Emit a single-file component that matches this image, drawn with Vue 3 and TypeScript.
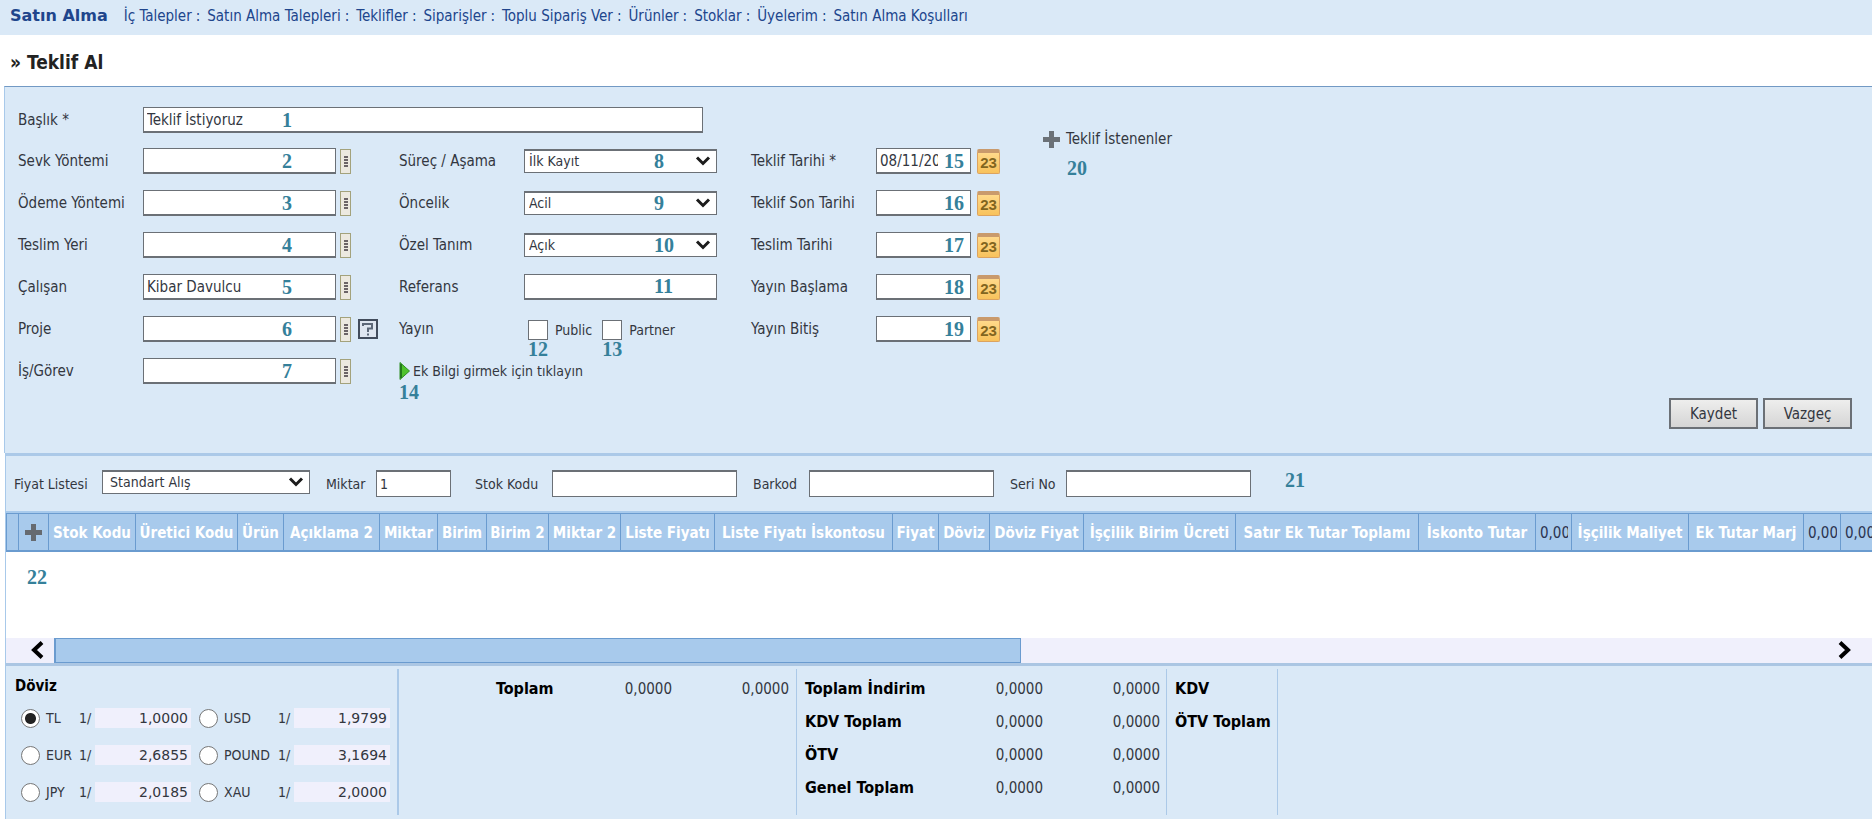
<script setup lang="ts">
import { ref } from 'vue'

interface LookupField {
  id: string
  label: string
  value: string
  mark: number
  help?: boolean
}
interface SelectField {
  id: string
  label: string
  value: string
  mark: number
}
interface Column {
  label?: string
  amount?: string
  width: number
  add?: boolean
}
interface Rate {
  code: string
  value: string
}

const navLinks = ['İç Talepler', 'Satın Alma Talepleri', 'Teklifler', 'Siparişler', 'Toplu Sipariş Ver', 'Ürünler', 'Stoklar', 'Üyelerim', 'Satın Alma Koşulları']

const lookups = ref<LookupField[]>([
  { id: 'sevk', label: 'Sevk Yöntemi', value: '', mark: 2 },
  { id: 'odeme', label: 'Ödeme Yöntemi', value: '', mark: 3 },
  { id: 'teslim-yeri', label: 'Teslim Yeri', value: '', mark: 4 },
  { id: 'calisan', label: 'Çalışan', value: 'Kibar Davulcu', mark: 5 },
  { id: 'proje', label: 'Proje', value: '', mark: 6, help: true },
  { id: 'is-gorev', label: 'İş/Görev', value: '', mark: 7 },
])

const selects: SelectField[] = [
  { id: 'surec', label: 'Süreç / Aşama', value: 'İlk Kayıt', mark: 8 },
  { id: 'oncelik', label: 'Öncelik', value: 'Acil', mark: 9 },
  { id: 'ozel-tanim', label: 'Özel Tanım', value: 'Açık', mark: 10 },
]

const dates = ref<SelectField[]>([
  { id: 'teklif-tarihi', label: 'Teklif Tarihi *', value: '08/11/2013', mark: 15 },
  { id: 'son-tarih', label: 'Teklif Son Tarihi', value: '', mark: 16 },
  { id: 'teslim-tarihi', label: 'Teslim Tarihi', value: '', mark: 17 },
  { id: 'yayin-baslama', label: 'Yayın Başlama', value: '', mark: 18 },
  { id: 'yayin-bitis', label: 'Yayın Bitiş', value: '', mark: 19 },
])

const filters = [
  { id: 'stok-kodu', label: 'Stok Kodu' },
  { id: 'barkod', label: 'Barkod' },
  { id: 'seri-no', label: 'Seri No' },
]

const columns: Column[] = [
  { width: 12 },
  { width: 30, add: true },
  { label: 'Stok Kodu', width: 87 },
  { label: 'Üretici Kodu', width: 102 },
  { label: 'Ürün', width: 46 },
  { label: 'Açıklama 2', width: 96 },
  { label: 'Miktar', width: 58 },
  { label: 'Birim', width: 49 },
  { label: 'Birim 2', width: 62 },
  { label: 'Miktar 2', width: 72 },
  { label: 'Liste Fiyatı', width: 94 },
  { label: 'Liste Fiyatı İskontosu', width: 178 },
  { label: 'Fiyat', width: 46 },
  { label: 'Döviz', width: 51 },
  { label: 'Döviz Fiyat', width: 94 },
  { label: 'İşçilik Birim Ücreti', width: 152 },
  { label: 'Satır Ek Tutar Toplamı', width: 183 },
  { label: 'İskonto Tutar', width: 117 },
  { amount: '0,0000', width: 36 },
  { label: 'İşçilik Maliyet', width: 117 },
  { label: 'Ek Tutar Marj', width: 115 },
  { amount: '0,0000', width: 37 },
  { amount: '0,0000', width: 36 },
]
const tableWidth = columns.reduce((sum, c) => sum + c.width, 0)

const currency = ref('TL')
const rates: Rate[] = [
  { code: 'TL', value: '1,0000' },
  { code: 'USD', value: '1,9799' },
  { code: 'EUR', value: '2,6855' },
  { code: 'POUND', value: '3,1694' },
  { code: 'JPY', value: '2,0185' },
  { code: 'XAU', value: '2,0000' },
]
const totals = ['Toplam İndirim', 'KDV Toplam', 'ÖTV', 'Genel Toplam']

const title = ref('Teklif İstiyoruz')
const quantity = ref('1')
</script>

<template>
  <div class="page">
    <nav class="nav">
      <strong class="module">Satın Alma</strong>
      <template v-for="(link, i) in navLinks" :key="link">
        <span v-if="i > 0" class="sep">:</span>
        <a href="#">{{ link }}</a>
      </template>
    </nav>

    <h1 class="title">» Teklif Al</h1>

    <form class="panel" @submit.prevent>
      <div class="fields">
        <div class="group wide">
          <div class="row">
            <label class="label" for="baslik">Başlık *</label>
            <div class="box full">
              <input id="baslik" v-model="title" type="text" />
              <span class="mark at-mid">1</span>
            </div>
          </div>
        </div>

        <div class="group">
          <div v-for="f in lookups" :key="f.id" class="row">
            <label class="label" :for="f.id">{{ f.label }}</label>
            <div class="box">
              <input :id="f.id" v-model="f.value" type="text" />
              <span class="mark at-mid">{{ f.mark }}</span>
            </div>
            <button type="button" class="pick" :aria-label="f.label">
              <svg width="4" height="11" viewBox="0 0 4 11" shape-rendering="crispEdges">
                <path d="M0 0h4v2H0zM0 3h4v2H0zM0 6h4v2H0zM0 9h4v2H0z" fill="#6b6468" />
              </svg>
            </button>
            <button v-if="f.help" type="button" class="help" aria-label="Yardım">
              <svg width="14" height="14" viewBox="0 0 14 14" fill="none" stroke="#5d6878" stroke-width="2">
                <path d="M2 4V2h9v4.500H7V10M7 11.500v2" />
              </svg>
            </button>
          </div>
        </div>

        <div class="group">
          <div v-for="f in selects" :key="f.id" class="row">
            <label class="label" :for="f.id">{{ f.label }}</label>
            <div class="box">
              <select :id="f.id"><option>{{ f.value }}</option></select>
              <svg class="chevron" width="16" height="10" viewBox="0 0 16 10">
                <path d="M2 1.500L8 7.500L14 1.500" fill="none" stroke="#1c1c1c" stroke-width="3" />
              </svg>
              <span class="mark at-select">{{ f.mark }}</span>
            </div>
          </div>
          <div class="row">
            <label class="label" for="referans">Referans</label>
            <div class="box">
              <input id="referans" type="text" />
              <span class="mark at-select">11</span>
            </div>
          </div>
          <div class="row">
            <span class="label">Yayın</span>
            <div class="checks">
              <label class="check"><input type="checkbox" />Public<span class="mark below">12</span></label>
              <label class="check"><input type="checkbox" />Partner<span class="mark below">13</span></label>
            </div>
          </div>
          <div class="row">
            <a href="#" class="more">
              <svg width="11" height="18" viewBox="0 0 11 18">
                <path d="M1 0.500L10.500 9L1 17.500Z" fill="#4fc32d" stroke="#2f8f22" />
                <path d="M2 2v14" stroke="#237a1c" stroke-width="2" />
              </svg>
              Ek Bilgi girmek için tıklayın
              <span class="mark below">14</span>
            </a>
          </div>
        </div>

        <div class="group">
          <div v-for="f in dates" :key="f.id" class="row">
            <label class="label" :for="f.id">{{ f.label }}</label>
            <div class="box date">
              <input :id="f.id" v-model="f.value" type="text" />
              <span class="mark at-date">{{ f.mark }}</span>
            </div>
            <button type="button" class="calendar" :aria-label="f.label + ' seç'">23</button>
          </div>
        </div>

        <div class="vendors">
          <button type="button" class="add-vendor">
            <svg width="17" height="17" viewBox="0 0 17 17"><path d="M6 0h5v6h6v5h-6v6H6v-6H0V6h6z" fill="#6b7177" /></svg>
            Teklif İstenenler
          </button>
          <span class="mark">20</span>
        </div>
      </div>

      <div class="actions">
        <button type="submit">Kaydet</button>
        <button type="button">Vazgeç</button>
      </div>
    </form>

    <div class="basket">
      <div class="filter">
        <label class="filter-item">
          Fiyat Listesi
          <span class="box list">
            <select><option>Standart Alış</option></select>
            <svg class="chevron" width="16" height="10" viewBox="0 0 16 10">
              <path d="M2 1.500L8 7.500L14 1.500" fill="none" stroke="#1c1c1c" stroke-width="3" />
            </svg>
          </span>
        </label>
        <label class="filter-item qty">Miktar <span class="box"><input v-model="quantity" type="text" /></span></label>
        <label v-for="f in filters" :key="f.id" class="filter-item" :class="f.id">{{ f.label }} <span class="box"><input type="text" /></span></label>
        <span class="mark filter-mark">21</span>
      </div>

      <div class="grid">
        <table :style="{ width: tableWidth + 'px' }">
          <colgroup>
            <col v-for="(c, i) in columns" :key="i" :style="{ width: c.width + 'px' }" />
          </colgroup>
          <thead>
            <tr>
              <th v-for="(c, i) in columns" :key="i" scope="col">
                <button v-if="c.add" type="button" class="add-row" aria-label="Satır ekle">
                  <svg width="17" height="17" viewBox="0 0 17 17"><path d="M6 0h5v6h6v5h-6v6H6v-6H0V6h6z" fill="#666a70" /></svg>
                </button>
                <input v-else-if="c.amount" type="text" class="amount" :value="c.amount" aria-label="Tutar" />
                <template v-else>{{ c.label }}</template>
              </th>
            </tr>
          </thead>
        </table>
        <div class="rows"><span class="mark">22</span></div>
      </div>

      <div class="scroll">
        <button type="button" class="arrow" aria-label="Sola kaydır">
          <svg width="14" height="18" viewBox="0 0 14 18"><path d="M12 1.500L4 9L12 16.500" fill="none" stroke="#000" stroke-width="4" /></svg>
        </button>
        <div class="thumb"></div>
        <div class="track"></div>
        <button type="button" class="arrow" aria-label="Sağa kaydır">
          <svg width="14" height="18" viewBox="0 0 14 18"><path d="M2 1.500L10 9L2 16.500" fill="none" stroke="#000" stroke-width="4" /></svg>
        </button>
      </div>
    </div>

    <footer class="summary">
      <fieldset class="rates">
        <legend>Döviz</legend>
        <div class="rate-grid">
          <div v-for="r in rates" :key="r.code" class="rate">
            <label class="rate-name"><input v-model="currency" type="radio" name="currency" :value="r.code" />{{ r.code }}</label>
            <span class="per">1/</span>
            <input type="text" class="rate-value" :value="r.value" :aria-label="r.code + ' kuru'" />
          </div>
        </div>
      </fieldset>
      <div class="cell sum">
        <table>
          <tbody>
            <tr><th scope="row">Toplam</th><td>0,0000</td><td>0,0000</td></tr>
          </tbody>
        </table>
      </div>
      <div class="cell totals">
        <table>
          <tbody>
            <tr v-for="t in totals" :key="t"><th scope="row">{{ t }}</th><td>0,0000</td><td>0,0000</td></tr>
          </tbody>
        </table>
      </div>
      <div class="cell taxes">
        <table>
          <tbody>
            <tr><th scope="row">KDV</th></tr>
            <tr><th scope="row">ÖTV Toplam</th></tr>
          </tbody>
        </table>
      </div>
    </footer>
  </div>
</template>

<style>
body {
  margin: 0;
  background: #fff;
}
</style>

<style scoped>
.page {
  display: flex;
  flex-direction: column;
  min-height: 100vh;
  overflow: hidden;
  font-family: "DejaVu Sans Condensed", Tahoma, "DejaVu Sans", sans-serif;
  font-size: 15px;
  line-height: 20px;
  color: #33373f;
}
.page *,
.page {
  box-sizing: border-box;
}
input,
select,
button {
  margin: 0;
  font: inherit;
  line-height: 20px;
  color: inherit;
}
button {
  padding: 0;
  border: 0;
  background: none;
}
svg {
  display: block;
  flex: none;
}
a {
  color: inherit;
  text-decoration: none;
}

.nav {
  display: flex;
  align-items: center;
  height: 35px;
  padding: 0 10px 3px;
  background: #dae9f7;
  color: #20458c;
  white-space: nowrap;
}
.module {
  margin-right: 16px;
  font-family: "DejaVu Sans", Verdana, sans-serif;
  font-size: 16px;
}
.sep {
  margin: 0 7px 0 4px;
}

.title {
  margin: 17px 0 14px 10px;
  font-size: 19px;
  line-height: 20px;
  color: #222;
}

.panel {
  margin-left: 4px;
  padding: 12px 20px 24px 13px;
  border-top: 1px solid #7299c4;
  border-left: 1px solid #a8c9ea;
  background: #dae9f7;
}
.fields {
  display: grid;
  grid-template-columns: 381px 352px 292px 1fr;
  grid-template-rows: 41px auto;
}
.wide {
  grid-column: 1 / 4;
}
.group {
  display: grid;
  grid-auto-rows: 42px;
  align-content: start;
}
.vendors {
  display: flex;
  flex-direction: column;
  grid-row: 1 / 3;
  grid-column: 4;
  align-items: flex-start;
  gap: 9px;
  padding-top: 30px;
}
.vendors .mark {
  margin-left: 24px;
}
.add-vendor {
  display: flex;
  align-items: center;
  gap: 6px;
}
.row {
  display: flex;
  align-items: center;
}
.label {
  flex: none;
  width: 125px;
}
.box {
  position: relative;
  display: block;
  flex: none;
  width: 193px;
}
.box.full {
  width: 560px;
}
.box.date {
  width: 95px;
}
.box input,
.box select {
  display: block;
  width: 100%;
  height: 26px;
  padding: 0 3px;
  border: 1px solid #6b7076;
  border-bottom-width: 2px;
  border-radius: 0;
  background: #fff;
  outline: none;
}
.box select {
  height: 24px;
  padding: 0 4px 2px;
  border-width: 2px 1px 1px;
  font-size: 14px;
  line-height: 18px;
  appearance: none;
}
.box.date input {
  padding-right: 32px;
}
.chevron {
  position: absolute;
  top: 7px;
  right: 6px;
  pointer-events: none;
}
.mark {
  font-family: "Liberation Serif", "Times New Roman", serif;
  font-size: 20px;
  font-weight: bold;
  line-height: 20px;
  color: #35809a;
  pointer-events: none;
}
.at-mid,
.at-select,
.at-date,
.below {
  position: absolute;
  top: 3px;
}
.at-mid {
  left: 139px;
}
.at-select {
  left: 130px;
  top: 2px;
}
.at-date {
  right: 7px;
}
.pick {
  display: flex;
  align-items: center;
  justify-content: center;
  width: 11px;
  height: 25px;
  margin-left: 4px;
  border: 1px solid #a3a27c;
  background: #ece9e0;
}
.help {
  display: flex;
  align-items: center;
  justify-content: center;
  width: 20px;
  height: 20px;
  margin-left: 7px;
  border: 2px solid #424c5c;
  background: #dfe6f0;
}
.checks {
  display: flex;
  gap: 10px;
  margin-left: 4px;
  font-size: 14px;
}
.check {
  position: relative;
  display: flex;
  align-items: center;
  gap: 7px;
  padding-top: 2px;
}
.check input {
  width: 20px;
  height: 20px;
  border: 1px solid #6b7076;
  background: #fff;
  appearance: none;
}
.check .below,
.more .below {
  left: 0;
  top: 21px;
}
.more {
  position: relative;
  display: flex;
  align-items: center;
  gap: 3px;
  font-size: 14px;
}
.calendar {
  width: 23px;
  height: 25px;
  margin-left: 6px;
  border: 1px solid #dca35f;
  border-top: 4px solid #c99a6c;
  border-radius: 2px;
  background: linear-gradient(#ffd98a, #f8c25c);
  font-family: "Liberation Sans", Arial, sans-serif;
  font-weight: bold;
  color: #82651f;
}
.actions {
  display: flex;
  justify-content: flex-end;
  gap: 5px;
  margin-top: 6px;
}
.actions button {
  width: 89px;
  height: 31px;
  border: 2px solid #6b7076;
  background: linear-gradient(#eeeeed, #d5d5d5);
}

.basket {
  margin-left: 5px;
  border-left: 1px solid #a8c9ea;
}
.filter {
  display: flex;
  align-items: flex-start;
  height: 60px;
  padding: 14px 0 0 8px;
  border-top: 3px solid #abc9e8;
  border-bottom: 2px solid #a8caec;
  background: #dae9f7;
  font-size: 14px;
  white-space: nowrap;
}
.filter-item {
  display: flex;
  align-items: flex-start;
  justify-content: space-between;
  width: 241px;
  margin-right: 16px;
  line-height: 28px;
}
.filter-item:first-child {
  width: 296px;
}
.filter-item .box {
  width: 185px;
}
.filter-item .list {
  width: 208px;
}
.filter-item .list select {
  padding-left: 7px;
}
.filter-item.qty {
  width: 125px;
  margin-right: 24px;
}
.filter-item.qty .box {
  width: 75px;
}
.filter-item.stok-kodu {
  width: 262px;
}
.filter-item input {
  height: 27px;
  border-width: 2px 1px 1px;
}
.filter-mark {
  margin-left: 18px;
}
.grid {
  overflow: hidden;
}
.grid table {
  table-layout: fixed;
  border-collapse: collapse;
}
.grid th {
  height: 37px;
  padding: 2px 0 0;
  border: 1px solid #6a9bcf;
  border-bottom-width: 2px;
  background: #a8caec;
  color: #fff;
  font-size: 15px;
  font-weight: bold;
  text-align: center;
  white-space: nowrap;
}
.add-row {
  display: block;
  margin: 0 auto;
}
.amount {
  display: block;
  width: 100%;
  padding: 0 3px 0 4px;
  border: 0;
  background: none;
  color: #2b3350;
  font-weight: normal;
}
.rows {
  height: 86px;
  padding: 15px 21px;
}
.scroll {
  display: flex;
  height: 28px;
  border-bottom: 3px solid #abc6e3;
  background: #f0f0fc;
}
.arrow {
  display: flex;
  align-items: center;
  justify-content: flex-end;
  width: 48px;
  padding-right: 10px;
}
.arrow:last-child {
  justify-content: flex-start;
  padding: 0 0 0 14px;
}
.track {
  flex: 5;
}
.thumb {
  flex: 6;
  border: 1px solid #6a9bcf;
  border-left-width: 2px;
  background: #a8caec;
}

.summary {
  display: flex;
  flex: 1;
  margin-left: 5px;
  padding: 3px 0 4px;
  border-left: 1px solid #a8c9ea;
  background: #dae9f7;
}
.rates {
  flex: none;
  width: 393px;
  margin: 0;
  padding: 7px 0 0 9px;
  border: 0;
  border-right: 2px solid #abc9e8;
}
.rates legend {
  float: left;
  width: 100%;
  padding: 0;
  font-weight: bold;
  color: #000;
}
.rate-grid {
  display: grid;
  grid-template-columns: 176px 199px;
  grid-auto-rows: 37px;
  clear: both;
  padding-top: 4px;
  font-size: 14px;
}
.rate {
  display: flex;
  align-items: center;
  padding-left: 6px;
}
.rate:nth-child(even) {
  padding-left: 8px;
}
.rate-name {
  display: flex;
  flex: 1;
  align-items: center;
  gap: 6px;
}
.rate-name input {
  width: 19px;
  height: 19px;
  border: 1px solid #777;
  border-radius: 50%;
  background: #fff;
  appearance: none;
}
.rate-name input:checked {
  background: radial-gradient(circle, #222 0 5px, #fff 6px);
}
.per {
  width: 16px;
}
.rate-value {
  width: 96px;
  height: 20px;
  padding: 0 3px;
  border: 0;
  background: #f0f0fc;
  font-family: "DejaVu Sans", Verdana, sans-serif;
  text-align: right;
}
.cell {
  flex: none;
  padding-top: 4px;
  border-right: 1px solid #abc9e8;
}
.cell table {
  border-collapse: collapse;
}
.cell th,
.cell td {
  height: 33px;
  padding: 0;
  text-align: left;
  white-space: nowrap;
}
.cell th {
  font-size: 16px;
  color: #000;
}
.cell td {
  width: 117px;
  text-align: right;
}
.sum {
  width: 398px;
  padding-left: 97px;
}
.sum th {
  width: 59px;
}
.totals {
  width: 370px;
  padding-left: 8px;
}
.totals th {
  width: 121px;
}
.taxes {
  width: 111px;
  padding-left: 8px;
}
</style>
